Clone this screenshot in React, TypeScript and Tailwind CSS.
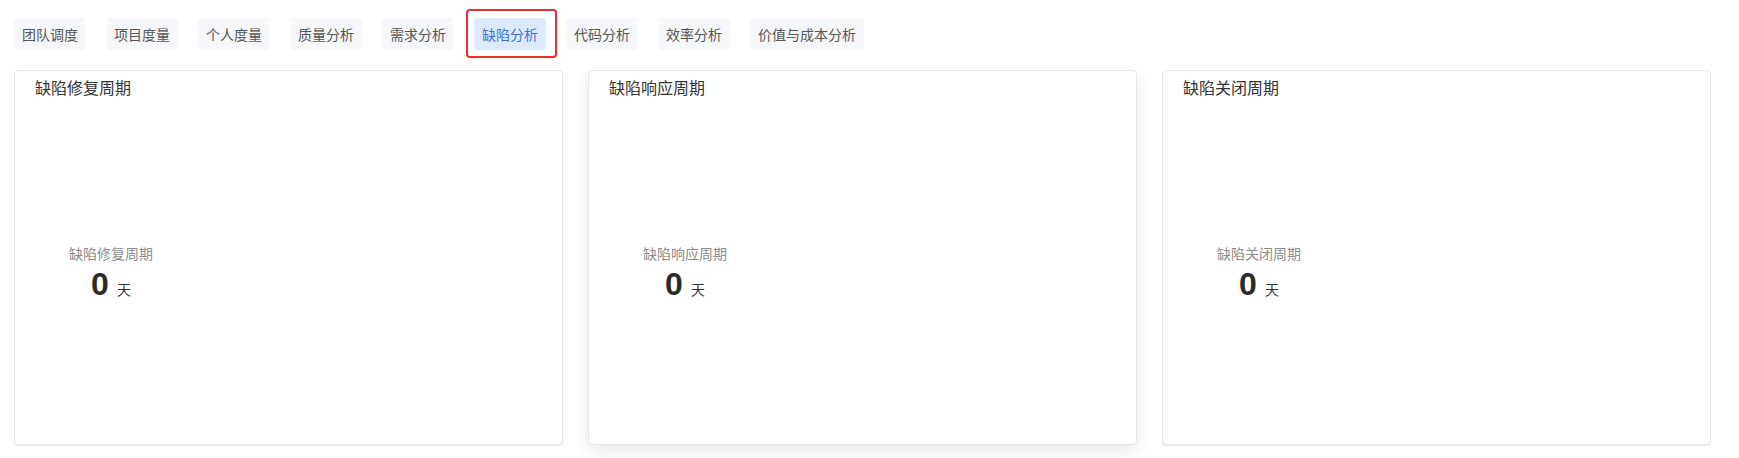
import { useState } from 'react'

const tabs = ['团队调度', '项目度量', '个人度量', '质量分析', '需求分析', '缺陷分析', '代码分析', '效率分析', '价值与成本分析']

const cards = [
    { title: '缺陷修复周期', hover: false },
    { title: '缺陷响应周期', hover: true },
    { title: '缺陷关闭周期', hover: false },
]

const cjk = { fontFamily: '"Noto Sans CJK SC", "Microsoft YaHei", sans-serif' }

export default function App() {
    const [active, setActive] = useState('缺陷分析')
    return (
        <main className="bg-white min-h-[470px] pl-[14px] pt-[18px]" style={cjk}>
            {/* Tabs */}
            <nav className="flex items-center gap-[20px]">
                {tabs.map((t) => (
                    <div key={t} className="relative">
                        <button
                            onClick={() => setActive(t)}
                            className={
                                t === active
                                    ? 'h-[32px] px-[8px] rounded-[4px] text-[14px] leading-[32px] bg-[#dceafd] text-[#3b72d9]'
                                    : 'h-[32px] px-[8px] rounded-[4px] text-[14px] leading-[32px] bg-[#f5f7fa] text-[#555]'
                            }
                        >
                            {t}
                        </button>
                        {t === active && (
                            <div className="absolute -left-[8px] -right-[11px] -top-[9px] -bottom-[8px] border-2 border-[#e5312b] rounded-[4px] pointer-events-none" />
                        )}
                    </div>
                ))}
            </nav>
            {/* Cards */}
            <section className="grid grid-cols-[549px_549px_549px] gap-[25px] mt-[20px]">
                {cards.map((c) => (
                    <div
                        key={c.title}
                        className={
                            c.hover
                                ? 'h-[375px] flex flex-col bg-white border border-[#e6e6e6] rounded-[4px] shadow-[0_6px_18px_rgba(0,0,0,0.09)]'
                                : 'h-[375px] flex flex-col bg-white border border-[#e6e6e6] rounded-[4px] shadow-[0_1px_1px_rgba(0,0,0,0.08)]'
                        }
                    >
                        <div className="h-[30px] pt-[4px] pl-[20px] text-[16px] leading-[24px] text-[#333]">{c.title}</div>
                        <div className="flex-1 flex items-center pl-[54px]">
                            <div className="flex flex-col items-center">
                                <span className="text-[14px] leading-[22px] text-[#8c8c8c]">{c.title}</span>
                                <div className="flex items-baseline gap-[8px] h-[40px]">
                                    <span className="text-[32px] leading-[40px] font-bold text-[#2b2b2b]" style={{ fontFamily: '"Liberation Sans", Arial, sans-serif' }}>0</span>
                                    <span className="text-[14px] text-[#333]">天</span>
                                </div>
                            </div>
                        </div>
                    </div>
                ))}
            </section>
        </main>
    )
}
